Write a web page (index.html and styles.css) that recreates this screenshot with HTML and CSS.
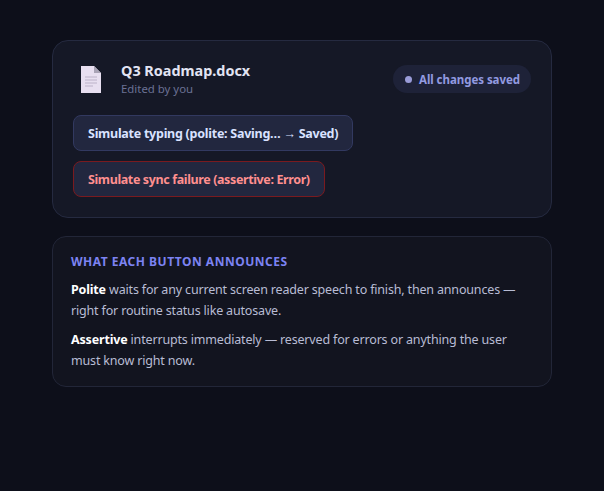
FILE: index.html
```html
<!DOCTYPE html>
<html lang="en">
<head>
  <meta charset="UTF-8">
  <meta name="viewport" content="width=device-width, initial-scale=1.0">
  <title>Q3 Roadmap.docx</title>
  <link rel="stylesheet" href="styles.css">
</head>
<body>
  <main class="wrap">
    <section class="card">
      <div class="doc-head">
        <div class="doc-info">
          <svg class="doc-icon" width="22" height="27" viewBox="0 0 22 27" aria-hidden="true">
            <path d="M1 0H14L21 7V27H1Z" fill="#e8dff0"/>
            <path d="M14 0L21 7H14Z" fill="#a9a3b5"/>
            <path d="M5 11H17M5 14H17M5 17H17M5 20H13" stroke="#bcb2c8" stroke-width="1"/>
          </svg>
          <div class="doc-text">
            <div class="doc-name">Q3 Roadmap.docx</div>
            <div class="doc-meta">Edited by you</div>
          </div>
        </div>
        <div class="status"><i class="dot"></i>All changes saved</div>
      </div>
      <div class="actions">
        <button class="btn">Simulate typing (polite: Saving… → Saved)</button>
        <button class="btn danger">Simulate sync failure (assertive: Error)</button>
      </div>
    </section>
    <section class="card notes">
      <h2>What each button announces</h2>
      <p><strong>Polite</strong> waits for any current screen reader speech to finish, then announces — right for routine status like autosave.</p>
      <p><strong>Assertive</strong> interrupts immediately — reserved for errors or anything the user must know right now.</p>
    </section>
  </main>
</body>
</html>
```

FILE: styles.css
```css
* {
  box-sizing: border-box;
}

body {
  margin: 0;
  min-height: 100vh;
  background: #0d0f1a;
  font-family: "Noto Sans", sans-serif;
  color: #e2e4f3;
}

.wrap {
  width: 500px;
  margin: 0 auto;
  padding-top: 40px;
  display: flex;
  flex-direction: column;
  gap: 18px;
}

.card {
  background: #151826;
  border: 1px solid #252a40;
  border-radius: 16px;
  padding: 20px;
}

.doc-head {
  display: flex;
  align-items: center;
  justify-content: space-between;
  margin-bottom: 10px;
  padding-bottom: 8px;
}

.doc-info {
  display: flex;
  align-items: center;
  gap: 19px;
  padding-left: 7px;
}

.doc-name {
  font-size: 14.4px;
  font-weight: 700;
  line-height: 20px;
}

.doc-meta {
  font-size: 11.4px;
  line-height: 16px;
  color: #6b7194;
}

.status {
  display: flex;
  align-items: center;
  gap: 7px;
  height: 28px;
  padding: 0 11px 0 12px;
  border-radius: 14px;
  background: #1e2238;
  color: #929ae0;
  font-size: 11.5px;
  font-weight: 700;
  letter-spacing: -0.05px;
}

.dot {
  width: 7px;
  height: 7px;
  border-radius: 50%;
  background: #9a9cd8;
}

.actions {
  display: flex;
  flex-direction: column;
  align-items: flex-start;
  gap: 10px;
}

.btn {
  height: 36px;
  padding: 0 14px;
  background: #22273f;
  border: 1px solid #323960;
  border-radius: 8px;
  color: #d9e2ff;
  font-family: inherit;
  font-size: 12.5px;
  font-weight: 700;
  letter-spacing: -0.26px;
}

.btn.danger {
  border-color: #7a1a1f;
  color: #ff8f8f;
  letter-spacing: -0.38px;
}

.notes {
  background: #12141f;
  border-color: #222638;
  border-radius: 14px;
  padding: 17px 18px 15px;
}

.notes h2 {
  margin: 0 0 9px;
  font-size: 12px;
  line-height: 16px;
  font-weight: 700;
  letter-spacing: 0.5px;
  text-transform: uppercase;
  color: #7c83f2;
}

.notes p {
  margin: 0 0 8px;
  font-size: 12.5px;
  line-height: 21px;
  letter-spacing: -0.17px;
  color: #b8bcd4;
}

.notes p:last-child {
  margin-bottom: 0;
}

.notes strong {
  color: #fff;
}
```
